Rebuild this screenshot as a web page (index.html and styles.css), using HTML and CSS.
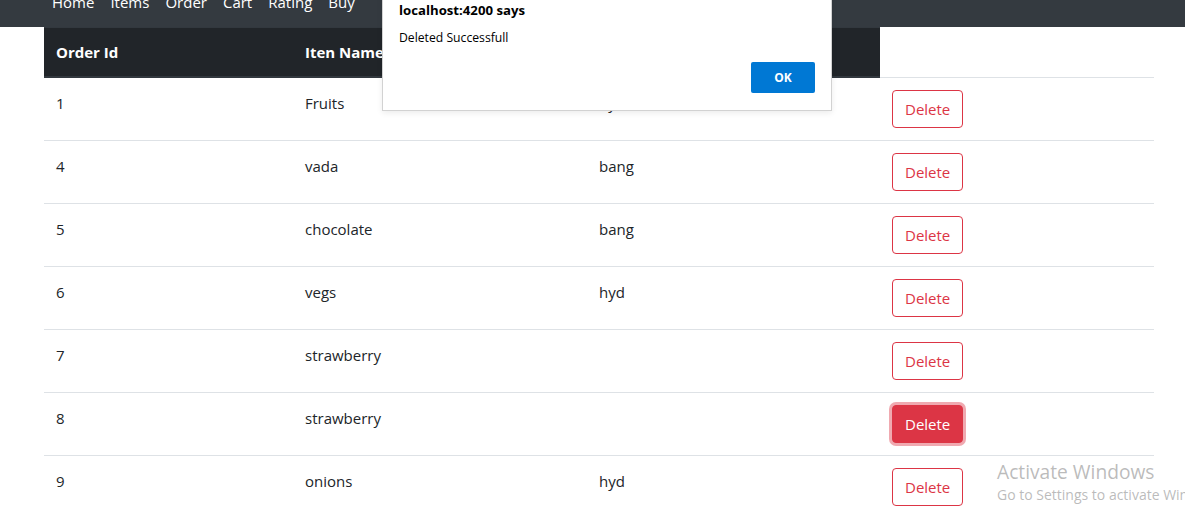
FILE: index.html
```html
<!DOCTYPE html>
<html lang="en">
<head>
<meta charset="utf-8">
<title>Orders</title>
<link rel="stylesheet" href="styles.css">
</head>
<body>
<nav class="navbar">
  <ul class="nav-links">
    <li class="nav-link">Home</li>
    <li class="nav-link">Items</li>
    <li class="nav-link">Order</li>
    <li class="nav-link">Cart</li>
    <li class="nav-link">Rating</li>
    <li class="nav-link">Buy</li>
  </ul>
</nav>
<main class="container">
  <table class="orders">
    <thead>
      <tr>
        <th class="col-id">Order Id</th>
        <th class="col-name">Iten Name</th>
        <th class="col-addr">Address</th>
      </tr>
    </thead>
    <tbody>
      <tr><td>1</td><td>Fruits</td><td>hyd</td><td class="action"><button class="btn-del">Delete</button></td></tr>
      <tr><td>4</td><td>vada</td><td>bang</td><td class="action"><button class="btn-del">Delete</button></td></tr>
      <tr><td>5</td><td>chocolate</td><td>bang</td><td class="action"><button class="btn-del">Delete</button></td></tr>
      <tr><td>6</td><td>vegs</td><td>hyd</td><td class="action"><button class="btn-del">Delete</button></td></tr>
      <tr><td>7</td><td>strawberry</td><td></td><td class="action"><button class="btn-del">Delete</button></td></tr>
      <tr><td>8</td><td>strawberry</td><td></td><td class="action"><button class="btn-del is-focused">Delete</button></td></tr>
      <tr><td>9</td><td>onions</td><td>hyd</td><td class="action"><button class="btn-del">Delete</button></td></tr>
    </tbody>
  </table>
</main>
<div class="dialog">
  <div class="dialog-title">localhost:4200 says</div>
  <div class="dialog-msg">Deleted Successfull</div>
  <div class="dialog-actions"><button class="dialog-ok">OK</button></div>
</div>
<div class="watermark">
  <div class="wm-title">Activate Windows</div>
  <div class="wm-sub">Go to Settings to activate Windows.</div>
</div>
</body>
</html>
```
FILE: styles.css
```css
* { box-sizing: border-box; }
html, body {
  margin: 0;
  padding: 0;
  background: #fff;
  overflow: hidden;
}
body {
  width: 1185px;
  height: 525px;
  font-family: "Open Sans", "Noto Sans", "Liberation Sans", sans-serif;
  font-size: 15px;
  line-height: 24px;
  color: #212529;
  position: relative;
}
.navbar {
  height: 27px;
  background: #343a40;
  overflow: hidden;
  padding-left: 44px;
}
.nav-links {
  list-style: none;
  margin: -10px 0 0 0;
  padding: 0;
  display: flex;
}
.nav-link {
  padding: 0 8px;
  color: #fff;
  font-size: 15px;
}
.container {
  padding-left: 44px;
}
.orders {
  width: 1110px;
  border-collapse: collapse;
}
.orders th {
  background: #212529;
  color: #fff;
  font-weight: 700;
  text-align: left;
  padding: 12px;
  border-top: 1px solid #32383e;
  border-bottom: 2px solid #32383e;
  vertical-align: bottom;
}
.col-id { width: 249px; }
.col-name { width: 294px; }
.col-addr { width: 293px; }
.orders td {
  padding: 13px 12px 12px;
  border-top: 1px solid #dee2e6;
  vertical-align: top;
}
.orders td.action {
  padding: 12px;
}
.btn-del {
  font-family: inherit;
  font-size: 15px;
  line-height: 24px;
  padding: 6px 12px;
  border: 1px solid #dc3545;
  border-radius: 4px;
  background: #fff;
  color: #dc3545;
  display: block;
}
.btn-del.is-focused {
  background: #dc3545;
  color: #fff;
  box-shadow: 0 0 0 3px rgba(225, 83, 97, 0.5);
}
.dialog {
  position: absolute;
  left: 382px;
  top: -20px;
  width: 450px;
  height: 131px;
  background: #fff;
  border: 1px solid #d2d2d2;
  box-shadow: 0 2px 6px rgba(0, 0, 0, 0.08);
  padding: 19px 16px 0 16px;
  font-family: "Open Sans", "Noto Sans", sans-serif;
}
.dialog-title {
  font-size: 13.2px;
  font-weight: 700;
  line-height: 20px;
  color: #000;
}
.dialog-msg {
  font-size: 12.2px;
  line-height: 16px;
  margin-top: 10px;
  color: #000;
}
.dialog-actions {
  display: flex;
  justify-content: flex-end;
  margin-top: 16px;
}
.dialog-ok {
  width: 64px;
  height: 31px;
  border: none;
  border-radius: 2px;
  background: #0078d4;
  color: #fff;
  font-family: inherit;
  font-weight: 700;
  font-size: 12px;
}
.watermark {
  position: absolute;
  left: 997px;
  top: 459px;
  white-space: nowrap;
  color: rgba(120, 120, 120, 0.5);
  font-family: "Open Sans", "Noto Sans", sans-serif;
}
.wm-title {
  font-size: 19.2px;
  line-height: 26px;
}
.wm-sub {
  font-size: 14px;
  line-height: 20px;
}
```
